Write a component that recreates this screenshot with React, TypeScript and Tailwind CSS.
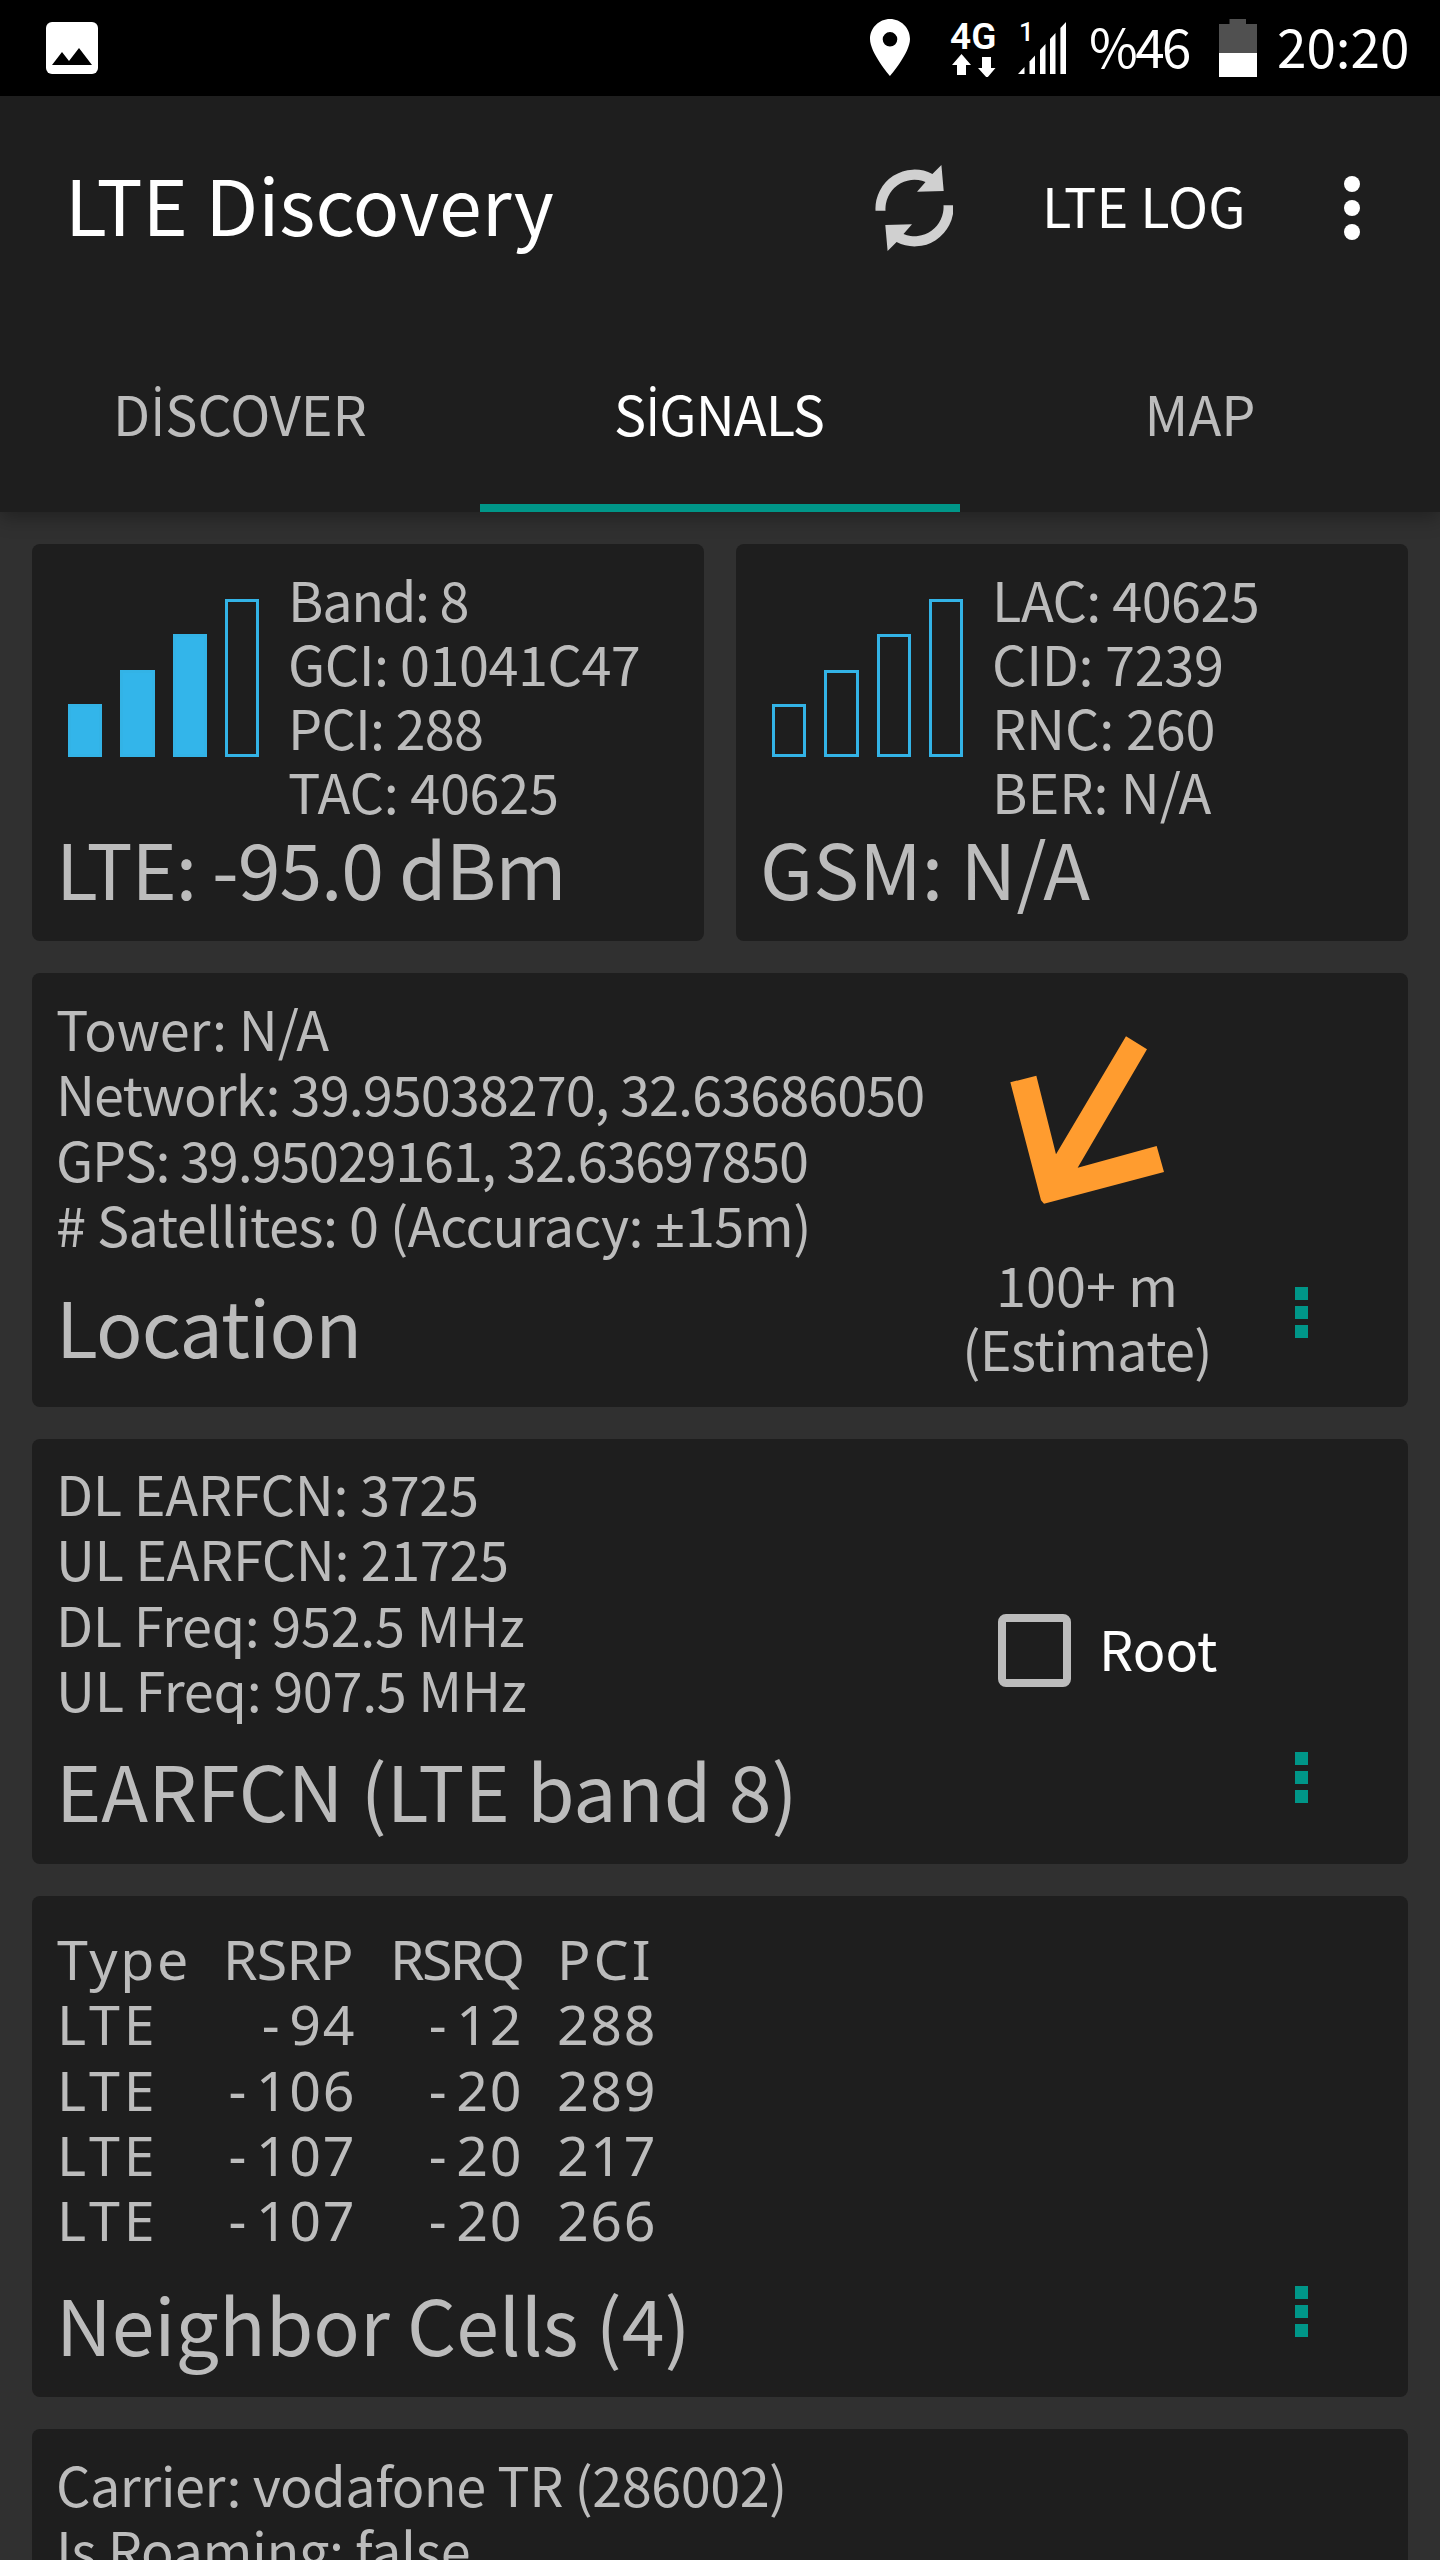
import type { ReactNode } from "react";

interface Line {
  text: ReactNode;
  tracking?: string;
}

const tabs = [
  {
    label: (
      <>
        D<span className="font-['Open_Sans',sans-serif]">İ</span>SCOVER
      </>
    ),
    className: "border-transparent",
  },
  {
    label: (
      <>
        S<span className="font-['Open_Sans',sans-serif]">İ</span>GNALS
      </>
    ),
    className: "border-[#009688] pr-[2px] text-white tracking-[-0.9px]",
  },
  { label: "MAP", className: "border-transparent" },
];

const lteLines: Line[] = [
  { text: "Band: 8", tracking: "tracking-[-1.3px]" },
  { text: "GCI: 01041C47", tracking: "tracking-[-0.5px]" },
  { text: "PCI: 288", tracking: "tracking-[-0.8px]" },
  { text: "TAC: 40625", tracking: "tracking-[-0.3px]" },
];

const gsmLines: Line[] = [
  { text: "LAC: 40625", tracking: "tracking-[-0.6px]" },
  { text: "CID: 7239", tracking: "tracking-[-0.3px]" },
  { text: "RNC: 260", tracking: "tracking-[-0.2px]" },
  { text: "BER: N/A" },
];

const locationLines: Line[] = [
  { text: "Tower: N/A", tracking: "tracking-[-0.1px]" },
  { text: "Network: 39.95038270, 32.63686050", tracking: "tracking-[-0.95px]" },
  { text: "GPS: 39.95029161, 32.63697850", tracking: "tracking-[-1.2px]" },
  {
    text: (
      <>
        # Satellites: 0 (Accuracy: <span className="font-['Noto_Sans',sans-serif]">±</span>15m)
      </>
    ),
    tracking: "tracking-[-0.55px]",
  },
];

const earfcnLines: Line[] = [
  { text: "DL EARFCN: 3725", tracking: "tracking-[-0.3px]" },
  { text: "UL EARFCN: 21725", tracking: "tracking-[-0.4px]" },
  { text: "DL Freq: 952.5 MHz", tracking: "tracking-[-0.3px]" },
  { text: "UL Freq: 907.5 MHz", tracking: "tracking-[-0.3px]" },
];

const carrierLines: Line[] = [
  { text: "Carrier: vodafone TR (286002)", tracking: "tracking-[-0.5px]" },
  { text: "Is Roaming: false", tracking: "tracking-[-0.45px]" },
];

const neighbors = [
  { type: "LTE", rsrp: "94", rsrq: "12", pci: "288" },
  { type: "LTE", rsrp: "106", rsrq: "20", pci: "289" },
  { type: "LTE", rsrp: "107", rsrq: "20", pci: "217" },
  { type: "LTE", rsrp: "107", rsrq: "20", pci: "266" },
];

const barHeights = ["h-[53px]", "h-[87px]", "h-[123px]", "h-[158px]"];

function StatusBar() {
  return (
    <div className="flex h-24 shrink-0 items-start bg-black text-white">
      <svg className="mt-[22px] ml-[46px] h-[52px] w-[52px]" viewBox="0 0 52 52">
        <rect width="52" height="52" rx="6" fill="#fff" />
        <path d="M6 43 L16 30 L23 39 L33 26 L46 43 Z" fill="#000" />
      </svg>
      <svg className="mt-[19px] ml-[772px] h-[57px] w-10" viewBox="0 0 40 57">
        <path
          fillRule="evenodd"
          fill="#fff"
          d="M20 0C9 0 0 9 0 20C0 34 20 57 20 57S40 34 40 20C40 9 31 0 20 0ZM20 13A7.3 7.3 0 1 1 20 27.6A7.3 7.3 0 1 1 20 13Z"
        />
      </svg>
      <div className="mt-[20px] ml-[40px] flex w-[48px] flex-col">
        <span className="font-['Roboto',sans-serif] text-[37px] leading-[33px] font-semibold">4G</span>
        <svg className="ml-[2px] h-6 w-11" viewBox="0 0 44 24" fill="#fff">
          <path d="M9.5 1L19 12H14V22H5V12H0Z" />
          <path d="M30 4H39V15H43.5L35 25L26 15H30Z" />
        </svg>
      </div>
      <div className="relative mt-[22px] ml-[20px] h-[52px] w-12">
        <span className="absolute top-[-4px] left-[1px] font-['Roboto',sans-serif] text-[26px] leading-[28px] font-medium">1</span>
        <svg className="h-[52px] w-12" viewBox="0 0 48 52" fill="#fff">
          <path d="M0 52L6.5 45V52Z" />
          <path d="M11.5 39.5L17 33.5V52H11.5Z" />
          <path d="M22 28L27.5 22V52H22Z" />
          <path d="M32 17L37.5 11V52H32Z" />
          <path d="M42.4 6L48 0V52H42.4Z" />
        </svg>
      </div>
      <span className="ml-[23px] w-[101px] text-[53px] leading-[90px] tracking-[-2.6px] whitespace-nowrap">%46</span>
      <svg className="mt-[19px] ml-[29px] h-[58px] w-[38px]" viewBox="0 0 38 58">
        <path d="M0 5H10.500V0H27V5H38V34H0Z" fill="#505050" />
        <rect y="34" width="38" height="24" fill="#fff" />
      </svg>
      <span className="ml-[20px] text-[53px] leading-[90px] whitespace-nowrap">20:20</span>
    </div>
  );
}

function AppBar() {
  const arrow =
    "M0.500 45.700A39 39 0 0 1 57.400 9L66.400 0L68.700 26L42 26.700L50.500 17A29 29 0 0 0 10.500 45.700Z";

  return (
    <div className="flex h-56 items-center pl-[65px] text-white">
      <h1 className="mb-[11px] w-[810px] text-[77px] leading-[96px] whitespace-nowrap">LTE Discovery</h1>
      <svg className="h-[86px] w-[78px]" viewBox="0 0 78 86" fill="#d0d0d0">
        <path d={arrow} />
        <path transform="rotate(180 39.500 43)" d={arrow} />
      </svg>
      <span className="mb-[7px] ml-[89px] w-[302px] text-[54px] leading-[64px] whitespace-nowrap">LTE LOG</span>
      <div className="flex flex-col gap-2">
        <span className="size-4 rounded-full bg-white" />
        <span className="size-4 rounded-full bg-white" />
        <span className="size-4 rounded-full bg-white" />
      </div>
    </div>
  );
}

function SignalBars({ level }: { level: number }) {
  return (
    <div className="flex h-[158px] w-[191px] items-end gap-[18px]">
      {barHeights.map((height, index) => (
        <div
          key={height}
          className={`w-[34.5px] border-[3px] border-[#33b3e6] ${height} ${index < level ? "bg-[#33b5ea]" : ""}`}
        />
      ))}
    </div>
  );
}

function Card({ className, children }: { className: string; children: ReactNode }) {
  return <section className={`rounded-lg bg-[#1e1e1e] ${className}`}>{children}</section>;
}

function Lines({ lines, className }: { lines: Line[]; className: string }) {
  return (
    <div className={`text-[54px] whitespace-nowrap ${className}`}>
      {lines.map((line, index) => (
        <p key={index} className={line.tracking}>
          {line.text}
        </p>
      ))}
    </div>
  );
}

function SignalCard({ level, lines, title }: { level: number; lines: Line[]; title: Line }) {
  return (
    <Card className="h-[397px] flex-1 pt-[23px] pl-[24px]">
      <div className="flex pl-[12px]">
        <div className="w-[220px] pt-[32px]">
          <SignalBars level={level} />
        </div>
        <Lines lines={lines} className="leading-[64px]" />
      </div>
      <h2 className={`-mt-[4px] text-[77px] leading-[96px] whitespace-nowrap ${title.tracking}`}>{title.text}</h2>
    </Card>
  );
}

function CardMenu() {
  return (
    <div className="flex flex-col gap-[6px]">
      <span className="size-[13px] bg-[#009688]" />
      <span className="size-[13px] bg-[#009688]" />
      <span className="size-[13px] bg-[#009688]" />
    </div>
  );
}

function Negative({ value }: { value: string }) {
  return (
    <p className="text-right">
      <span className="mr-[8px]">-</span>
      {value}
    </p>
  );
}

function NeighborTable() {
  return (
    <div className="grid grid-cols-[167px_133px_167px_133px] font-['Noto_Sans',sans-serif] text-[55.5px] leading-[65.33px] tracking-[1.6px]">
      <p className="pl-px tracking-[2.6px]">Type</p>
      <p className="tracking-[-0.8px]">RSRP</p>
      <p className="pl-[34px] tracking-[-2.6px]">RSRQ</p>
      <p className="pl-[34px] tracking-[3px]">PCI</p>
      {neighbors.map((cell) => (
        <div key={cell.pci} className="contents">
          <p className="pl-px tracking-[4px]">{cell.type}</p>
          <Negative value={cell.rsrp} />
          <Negative value={cell.rsrq} />
          <p className="pl-[34px]">{cell.pci}</p>
        </div>
      ))}
    </div>
  );
}

export default function App() {
  return (
    <div className="flex h-[2560px] w-[1440px] flex-col overflow-hidden bg-[#303030] font-['Noto_Sans_CJK_SC','Noto_Sans',sans-serif] text-[#bcbcbc]">
      <StatusBar />

      {/* Toolbar and tabs */}
      <header className="h-[416px] shrink-0 bg-[#1e1e1e] shadow-[0_6px_18px_rgba(0,0,0,0.3)]">
        <AppBar />
        <nav className="grid h-48 grid-cols-3 text-center text-[54px]">
          {tabs.map((tab, index) => (
            <div key={index} className={`h-48 border-b-8 leading-[186px] ${tab.className}`}>
              {tab.label}
            </div>
          ))}
        </nav>
      </header>

      <main className="flex flex-col gap-8 px-8 pt-8">
        <div className="flex gap-8">
          <SignalCard
            level={3}
            lines={lteLines}
            title={{ text: "LTE: -95.0 dBm", tracking: "tracking-[-1.1px]" }}
          />
          <SignalCard level={0} lines={gsmLines} title={{ text: "GSM: N/A", tracking: "tracking-[0.1px]" }} />
        </div>

        {/* Location */}
        <Card className="flex h-[434px] pt-[22px] pl-[24px]">
          <div className="w-[881px]">
            <Lines lines={locationLines} className="leading-[65.33px]" />
            <h2 className="mt-[18px] text-[77px] leading-[96px] tracking-[-0.8px]">Location</h2>
          </div>
          <div className="flex w-[300px] flex-col items-center">
            <svg className="mt-[41px] h-[168px] w-[154px]" viewBox="270 167 462 504">
              <path
                fill="#ff9c2f"
                d="M618 168L681 207L473 562L710 497L732 575L372 670L363 660L271 306L349 286L408 522Z"
              />
            </svg>
            <Lines
              lines={[{ text: "100+ m" }, { text: "(Estimate)", tracking: "tracking-[-0.7px]" }]}
              className="mt-[48px] text-center leading-[64px]"
            />
          </div>
          <div className="mt-[292px] ml-[58px]">
            <CardMenu />
          </div>
        </Card>

        {/* EARFCN */}
        <Card className="flex h-[425px] pt-[21px] pl-[24px]">
          <div className="w-[942px]">
            <Lines lines={earfcnLines} className="leading-[65.33px]" />
            <h2 className="mt-5 text-[77px] leading-[96px]">EARFCN (LTE band 8)</h2>
          </div>
          <div className="mt-[154px] flex h-[73px] w-[297px] items-center">
            <span className="size-[73px] rounded-lg border-8 border-[#bcbcbc]" />
            <span className="mb-[6px] ml-[28px] text-[54px] leading-[64px] text-white">Root</span>
          </div>
          <div className="mt-[292px]">
            <CardMenu />
          </div>
        </Card>

        {/* Neighbor cells */}
        <Card className="flex h-[501px] pt-[30px] pl-[24px]">
          <div className="w-[1239px]">
            <NeighborTable />
            <h2 className="mt-[22px] text-[77px] leading-[96px]">Neighbor Cells (4)</h2>
          </div>
          <div className="mt-[360px]">
            <CardMenu />
          </div>
        </Card>

        {/* Carrier */}
        <Card className="h-[433px] shrink-0 pt-[22px] pl-[24px]">
          <Lines lines={carrierLines} className="leading-[65.33px]" />
        </Card>
      </main>
    </div>
  );
}
